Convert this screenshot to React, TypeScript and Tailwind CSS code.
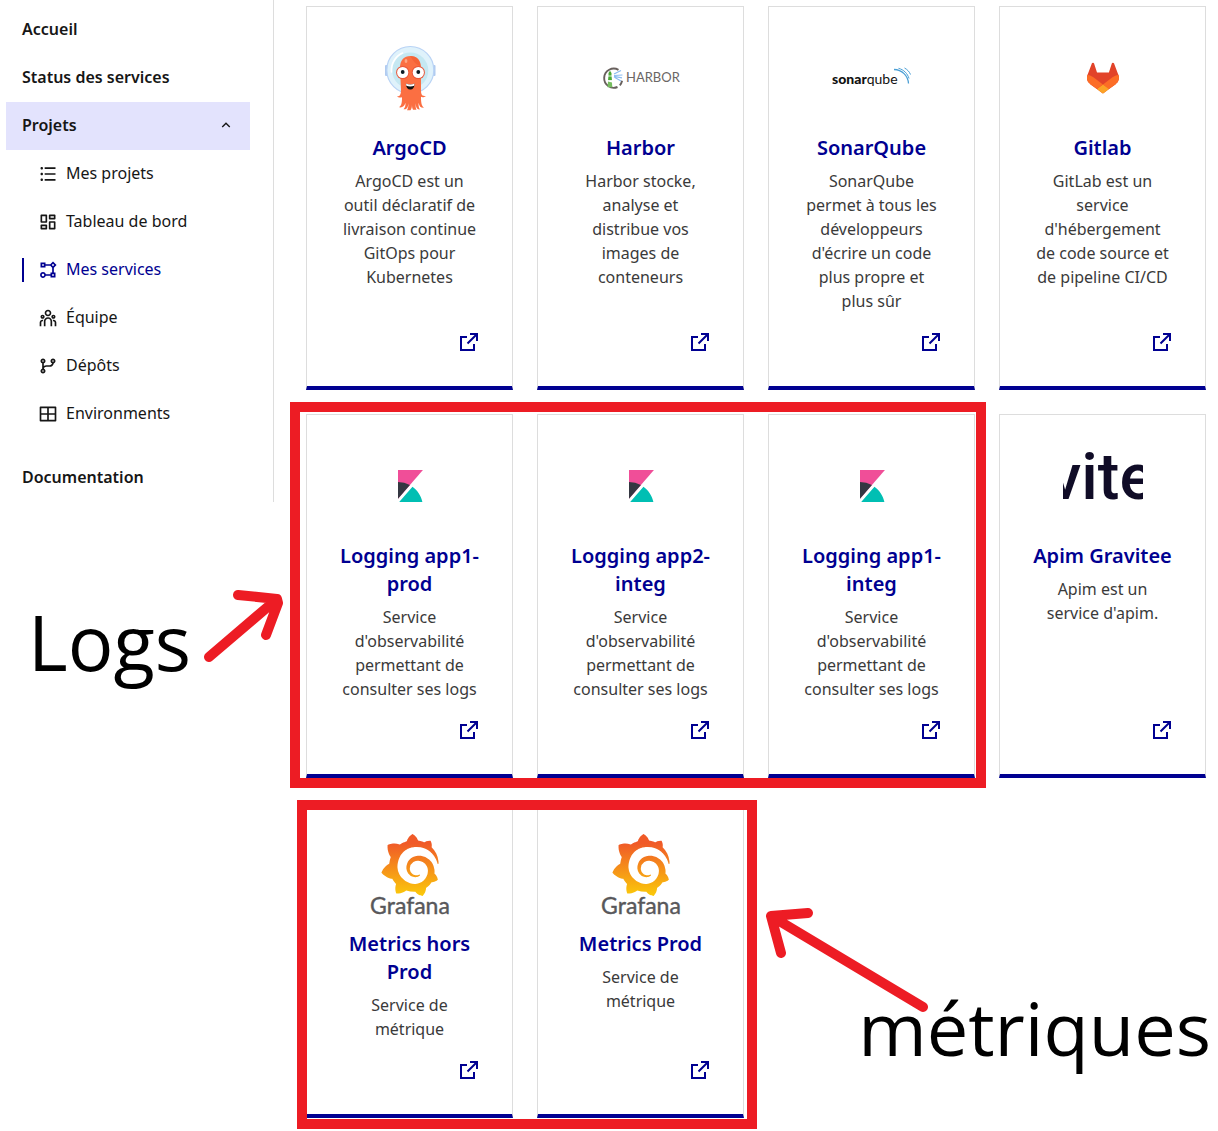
import React from "react";
import {
  RiArrowUpSLine,
  RiDashboardLine,
  RiFlowChart,
  RiGitBranchLine,
  RiLayoutGridLine,
  RiListUnordered,
  RiTeamLine,
} from "react-icons/ri";
import { SiGrafana } from "react-icons/si";

function ArgoLogo() {
  return (
    <svg viewBox="0 0 80 80" className="size-20" role="img" aria-label="Argo">
      <rect x="15" y="27" width="5" height="11" rx="1" fill="#b0cbf0" />
      <rect x="60.500" y="27" width="5" height="11" rx="1" fill="#b0cbf0" />
      <circle cx="40.300" cy="32" r="23.500" fill="#dff2fb" stroke="#b9d3f5" strokeWidth="1.200" />
      <circle cx="40.300" cy="32.500" r="18" fill="#c5e8f2" />
      <path d="M21.500 34a19 19 0 0 1 11-19" fill="none" stroke="#fff" strokeWidth="1.600" strokeLinecap="round" />
      <path
        d="M30 30c0-8 4-12 10.500-12S51 22 51 30v22c0 5 1 6 5 6-2 1.500-4 1.500-5 .800 0 6 .500 9 3 11-3 .300-4.500-1-5.500-5 0 4 .500 5.500 1.500 6.500-3 .500-4-1.500-4.500-6 0 4 .500 5.500 1 6.500h-3.500c-.800-1.500-1-3-1-5.500 0 3-.300 4.500-1.500 6H37c1-2 1.500-4 1.500-7-.500 4-1.500 6.500-5 6 1.500-1.500 2-3 2-6.500-1.500 4-3 5-6.500 4.500 2.500-1.500 3-4.500 3-10-1.500.500-4 .500-5-1 3 .200 4-2 4-6.300z"
        fill="#fb6f42"
      />
      <path d="M40.500 18c6 0 9.500 4 10 10-4-1-8-5-10-10z" fill="#f15c30" opacity=".6" />
      <ellipse cx="36" cy="23" rx="1.400" ry="2" fill="#ffa783" />
      <circle cx="32.700" cy="34.500" r="6.600" fill="#e9573a" />
      <circle cx="48.300" cy="34.500" r="6.600" fill="#e9573a" />
      <circle cx="32.700" cy="34.500" r="5.600" fill="#fff" />
      <circle cx="48.300" cy="34.500" r="5.600" fill="#fff" />
      <circle cx="32.700" cy="34" r="1.900" fill="#0b1a24" />
      <circle cx="48.300" cy="34" r="1.900" fill="#0b1a24" />
      <path d="M36 45.500c2.500 1.200 6 1.200 8.500 0 0 4-1.500 6-4.200 6S36 49.500 36 45.500z" fill="#111" />
      <path d="M36 45.500c2.500 1.200 6 1.200 8.500 0l-.3 2.300c-2.400.900-5.400.900-7.900 0z" fill="#fff" />
    </svg>
  );
}

function HarborLogo() {
  return (
    <svg viewBox="0 0 80 80" className="size-20" role="img" aria-label="Harbor">
      <path
        d="M17.500 31.800a9.600 9.600 0 1 0-1 17.200M18.800 47.300a9.600 9.600 0 0 0 2.300-4.500"
        fill="none"
        stroke="#68605d"
        strokeWidth="1.900"
      />
      <path d="M7.500 35l1.500-2.200 1.500 2.200v2.500l.5 5H7l.5-5z" fill="#4aa935" />
      <path d="M7 43.500l4 1 .3 4.800H6.600z" fill="#76bd5f" />
      <path d="M7 38h4M7 42.500h4" stroke="#fff" strokeWidth=".8" />
      <path d="M13 36l7-3.500M13 37.500l8.500-.5M13 39l7 4M13 38.300l8 1.500" stroke="#8bbcf0" strokeWidth="1.200" />
      <text x="25" y="44" fontFamily="Lato, sans-serif" fontSize="13" fill="#6b6664">
        HARBOR
      </text>
    </svg>
  );
}

function SonarQubeLogo() {
  return (
    <svg viewBox="0 0 80 80" className="size-20" role="img" aria-label="SonarQube">
      <text x="0" y="45.500" fontFamily="Lato, sans-serif" fontSize="14" fill="#111">
        <tspan fontWeight="900">sonar</tspan>
        <tspan>qube</tspan>
      </text>
      <g fill="none" stroke="#4b9fd5">
        <path d="M62 31.500c8 .300 14 6 14.500 14" strokeWidth="1.300" />
        <path d="M66.500 30.300c5.500 1.500 9 5.200 10.500 10.200" strokeWidth="1" />
        <path d="M72.500 30c3 1.600 5 4 6 6.500" strokeWidth="1" />
      </g>
    </svg>
  );
}

function GitlabLogo() {
  return (
    <svg viewBox="0 0 25 24" className="size-8" role="img" aria-label="GitLab">
      <path
        d="M24.507 9.500l-.034-.090L21.082.562a.896.896 0 00-1.694.091l-2.290 7.010H7.825L5.535.653a.898.898 0 00-1.694-.090L.451 9.411.416 9.500a6.297 6.297 0 002.090 7.278l.012.010.030.022 5.160 3.867 2.560 1.935 1.554 1.176a1.051 1.051 0 001.268 0l1.555-1.176 2.560-1.935 5.197-3.890.014-.010A6.297 6.297 0 0024.507 9.500z"
        fill="#e24329"
      />
      <path
        d="M24.507 9.500l-.034-.090a11.440 11.440 0 00-4.560 2.051l-7.447 5.632 4.742 3.584 5.197-3.890.014-.010A6.297 6.297 0 0024.507 9.500z"
        fill="#fc6d26"
      />
      <path
        d="M7.707 20.677l2.560 1.935 1.555 1.176a1.051 1.051 0 001.268 0l1.555-1.176 2.560-1.935-4.743-3.584-4.755 3.584z"
        fill="#fca326"
      />
      <path
        d="M5.010 11.461a11.430 11.430 0 00-4.560-2.050L.416 9.500a6.297 6.297 0 002.090 7.278l.012.010.030.022 5.160 3.867 4.745-3.584-7.444-5.632z"
        fill="#fc6d26"
      />
    </svg>
  );
}

function KibanaLogo() {
  return (
    <svg viewBox="0 0 32 32" className="size-8" role="img" aria-label="Kibana">
      <path d="M4 0v28.789L28.935.017z" fill="#f04e98" />
      <path d="M4 12v16.789l11.906-13.738A24.721 24.721 0 0 0 4 12z" fill="#343741" />
      <path d="M18.479 16.664L6.268 30.754l-1.073 1.237h23.191c-1.252-6.292-4.883-11.719-9.908-15.327z" fill="#00bfb3" />
    </svg>
  );
}

function GraviteeLogo() {
  return (
    <svg viewBox="0 0 80 80" className="size-20 overflow-hidden" role="img" aria-label="Gravitee">
      <text x="-14" y="53" fontFamily="Roboto, sans-serif" fontSize="65" fontWeight="500" fill="#100c27">
        vite
      </text>
    </svg>
  );
}

function GrafanaLogo() {
  return (
    <svg viewBox="0 0 80 80" className="size-20 overflow-visible" role="img" aria-label="Grafana">
      <defs>
        <linearGradient id="grafana-sun" x1="0" y1="0" x2="0" y2="1">
          <stop offset="0.150" stopColor="#f05a28" />
          <stop offset="1" stopColor="#fbca0a" />
        </linearGradient>
      </defs>
      <SiGrafana x="9" y="0" size={62} fill="url(#grafana-sun)" />
      <text x="40" y="80" textAnchor="middle" fontFamily="Lato, sans-serif" fontSize="23" fill="#58585b" stroke="#58585b" strokeWidth=".4">
        Grafana
      </text>
    </svg>
  );
}

type Service = { title: string; text: string; place: string; Logo: () => React.ReactElement };

const logsText = "Service\nd'observabilité\npermettant de\nconsulter ses logs";

const services: Service[] = [
  {
    title: "ArgoCD",
    text: "ArgoCD est un\noutil déclaratif de\nlivraison continue\nGitOps pour\nKubernetes",
    place: "col-start-1 row-start-1",
    Logo: ArgoLogo,
  },
  {
    title: "Harbor",
    text: "Harbor stocke,\nanalyse et\ndistribue vos\nimages de\nconteneurs",
    place: "col-start-2 row-start-1",
    Logo: HarborLogo,
  },
  {
    title: "SonarQube",
    text: "SonarQube\npermet à tous les\ndéveloppeurs\nd'écrire un code\nplus propre et\nplus sûr",
    place: "col-start-3 row-start-1",
    Logo: SonarQubeLogo,
  },
  {
    title: "Gitlab",
    text: "GitLab est un\nservice\nd'hébergement\nde code source et\nde pipeline CI/CD",
    place: "col-start-4 row-start-1",
    Logo: GitlabLogo,
  },
  { title: "Logging app1-\nprod", text: logsText, place: "col-start-1 row-start-2", Logo: KibanaLogo },
  { title: "Logging app2-\ninteg", text: logsText, place: "col-start-2 row-start-2", Logo: KibanaLogo },
  { title: "Logging app1-\ninteg", text: logsText, place: "col-start-3 row-start-2", Logo: KibanaLogo },
  { title: "Apim Gravitee", text: "Apim est un\nservice d'apim.", place: "col-start-4 row-start-2", Logo: GraviteeLogo },
  { title: "Metrics hors\nProd", text: "Service de\nmétrique", place: "col-start-1 row-start-3", Logo: GrafanaLogo },
  { title: "Metrics Prod", text: "Service de\nmétrique", place: "col-start-2 row-start-3", Logo: GrafanaLogo },
];

function ServiceCard({ title, text, place, Logo }: Service) {
  return (
    <a
      href="#"
      className={`${place} flex flex-col items-center border border-b-4 border-[#ddd] border-b-[#000091] px-6 pt-[31px] pb-8 text-center`}
    >
      <span className="flex h-20 items-center justify-center">
        <Logo />
      </span>
      <h3 className="mt-4 text-xl leading-7 font-semibold whitespace-pre text-[#000091]">{title}</h3>
      <p className="mt-[7px] mb-[17px] text-base leading-6 whitespace-pre text-[#3a3a3a]">{text}</p>
      <svg viewBox="0 0 24 24" className="mt-auto mr-[7px] size-6 shrink-0 self-end fill-[#000091]" aria-hidden="true">
        <path d="M10 6v2H5v11h11v-5h2v7H3V6h7zm11-3v8h-2V6.413l-7.793 7.794-1.414-1.414L17.585 5H13V3h8z" />
      </svg>
    </a>
  );
}

const projectLinks = [
  { label: "Mes projets", Icon: RiListUnordered },
  { label: "Tableau de bord", Icon: RiDashboardLine },
  { label: "Mes services", Icon: RiFlowChart, current: true },
  { label: "Équipe", Icon: RiTeamLine },
  { label: "Dépôts", Icon: RiGitBranchLine },
  { label: "Environments", Icon: RiLayoutGridLine },
];

function SideMenu() {
  return (
    <nav className="border-r border-[#ddd] pt-[6px] pr-[23px] pl-[6px] font-semibold text-[#161616]">
      <a href="#" className="flex h-12 items-center px-4 pb-[2px]">
        Accueil
      </a>
      <a href="#" className="flex h-12 items-center px-4 pb-[2px]">
        Status des services
      </a>
      <button
        type="button"
        aria-expanded="true"
        className="flex h-12 w-full items-center justify-between bg-[#e3e3fd] px-4 pb-[2px] font-semibold"
      >
        Projets
        <RiArrowUpSLine className="size-4" aria-hidden="true" />
      </button>
      <ul className="mb-4 font-normal">
        {projectLinks.map(({ label, Icon, current }) => (
          <li key={label} className="flex h-12 items-center px-4">
            <a
              href="#"
              aria-current={current ? "page" : undefined}
              className={`flex h-6 items-center gap-2 border-l-2 pl-[14px] ${current ? "border-[#000091] text-[#000091]" : "border-transparent"}`}
            >
              <Icon className="size-5" aria-hidden="true" />
              <span className="pb-[2px]">{label}</span>
            </a>
          </li>
        ))}
      </ul>
      <a href="#" className="flex h-12 items-center px-4 pb-[2px]">
        Documentation
      </a>
    </nav>
  );
}

export default function App() {
  return (
    <div className="flex min-h-screen items-start bg-white font-['Noto_Sans',sans-serif] text-base leading-6">
      <aside className="w-[274px] shrink-0">
        <SideMenu />
        <div className="mt-[86px] flex items-start justify-between pl-7 font-['Open_Sans',sans-serif]">
          <span className="mt-[14px] text-[76px] leading-[80px] text-black">Logs</span>
          <svg
            viewBox="0 0 80 76"
            className="-mr-[10px] h-[76px] w-20 shrink-0"
            fill="none"
            stroke="#ed1c24"
            strokeWidth="10"
            strokeLinecap="round"
            strokeLinejoin="round"
            aria-hidden="true"
          >
            <path d="M5 69L73 11M34 7l39 4 1 4-12 32" />
          </svg>
        </div>
      </aside>
      <main className="grid grow grid-cols-4 gap-6 pt-[6px] pr-3 pb-[13px] pl-8">
        {services.map((service) => (
          <ServiceCard key={service.place} {...service} />
        ))}
        <div className="pointer-events-none z-10 col-span-3 col-start-1 row-start-2 -mt-3 -mr-[11px] -mb-[10px] -ml-4 border-10 border-[#ed1c24]" />
        <div className="pointer-events-none z-10 col-span-2 col-start-1 row-start-3 -mt-[2px] -mr-[13px] -mb-[11px] -ml-[9px] border-10 border-[#ed1c24]" />
        <div className="col-span-2 col-start-3 row-start-3 flex flex-col pt-[104px] font-['Open_Sans',sans-serif]">
          <svg
            viewBox="0 0 164 108"
            className="-ml-[3px] h-[108px] w-[164px]"
            fill="none"
            stroke="#ed1c24"
            strokeWidth="10"
            strokeLinecap="round"
            strokeLinejoin="round"
            aria-hidden="true"
          >
            <path d="M158 101L6 10l37-3M6 10l10 37" />
          </svg>
          <span className="-mt-[26px] -mr-[5px] self-end text-[74px] leading-[80px] text-black">métriques</span>
        </div>
      </main>
    </div>
  );
}
